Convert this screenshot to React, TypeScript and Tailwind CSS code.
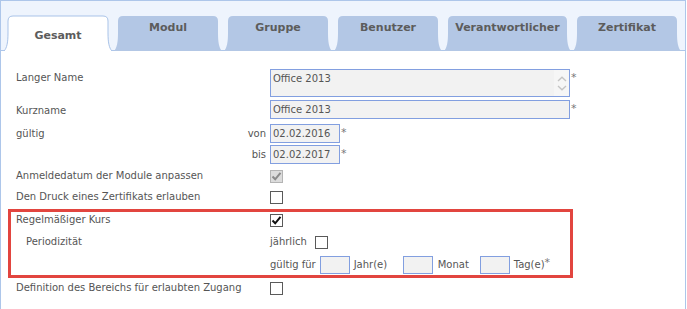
import React from "react";

const tabs = [
  { label: "Gesamt", w: 108, active: true },
  { label: "Modul", w: 108 },
  { label: "Gruppe", w: 108 },
  { label: "Benutzer", w: 108 },
  { label: "Verantwortlicher", w: 127 },
  { label: "Zertifikat", w: 108 },
];

function TabShape({ w, active }: { w: number; active?: boolean }) {
  const h = 36;
  const d = `M0,${h} C3,${h - 3} 4,${h - 9} 4,18 L4,6 Q4,1 9,1 L${w - 9},1 Q${w - 4},1 ${w - 4},6 L${w - 4},18 C${w - 4},${h - 9} ${w - 3},${h - 3} ${w},${h}`;
  return (
    <svg className="absolute inset-0" width={w} height={h} viewBox={`0 0 ${w} ${h}`}>
      <path d={d + " Z"} fill={active ? "#ffffff" : "#b3c7e5"} />
      {active && <path d={d} fill="none" stroke="#a9c3e8" strokeWidth="1" />}
    </svg>
  );
}

function Tab({ label, w, active }: { label: string; w: number; active?: boolean }) {
  return (
    <div className="relative -mb-px h-[36px] shrink-0" style={{ width: w }}>
      <TabShape w={w} active={active} />
      <div
        className={`relative text-center text-[11px] font-bold leading-[12px] text-[#5c5c5c] ${
          active ? "pt-[15px]" : "pt-[7px]"
        }`}
      >
        {label}
      </div>
    </div>
  );
}

function Checkbox({ checked, disabled }: { checked?: boolean; disabled?: boolean }) {
  return (
    <div
      className={`flex h-[13px] w-[13px] items-center justify-center border ${
        disabled ? "border-[#b4b4b4] bg-[#dcdcdc]" : "border-[#5a5a5a] bg-white"
      }`}
    >
      {checked && (
        <svg width="11" height="11" viewBox="0 0 11 11">
          <path
            d="M1.5,5.5 L4.2,8.3 L9.5,1.8"
            fill="none"
            stroke={disabled ? "#8a8a8a" : "#111111"}
            strokeWidth="2"
          />
        </svg>
      )}
    </div>
  );
}

function Star({ className = "" }: { className?: string }) {
  return <span className={`ml-[1px] text-[11px] leading-[13px] text-[#777] ${className}`}>*</span>;
}

function TextBox({ value, className }: { value?: string; className: string }) {
  return (
    <div
      className={`flex items-center border border-[#829fe0] bg-[#f2f2f2] pl-[2px] text-[10px] leading-[12px] text-[#555] ${className}`}
    >
      {value}
    </div>
  );
}

function Label({ children, className = "" }: { children?: React.ReactNode; className?: string }) {
  return <div className={`w-[254px] shrink-0 leading-[12px] ${className}`}>{children}</div>;
}

export default function App() {
  return (
    <div className="h-[309px] w-[687px] overflow-hidden bg-white font-['DejaVu_Sans',sans-serif] text-[10px] text-[#555]">
      <div className="h-full w-[686px] border-x border-t border-[#adc6ea]">
        <div className="flex h-[50px] items-end gap-[2px] border-b border-[#adc6ea] bg-[#eef4fd] pl-[3px]">
          {tabs.map((t) => (
            <Tab key={t.label} label={t.label} w={t.w} active={t.active} />
          ))}
        </div>

        <div className="pl-[15px] pt-[18px]">
          <div className="flex h-[28px] items-start">
            <Label className="pt-[3px]">Langer Name</Label>
            <div className="relative flex h-[28px] w-[300px] border border-[#829fe0] bg-[#f2f2f2]">
              <div className="flex-1 pl-[2px] pt-[3px] leading-[12px]">Office 2013</div>
              <div className="flex w-[15px] flex-col items-center justify-center gap-[3px] bg-[#f6f6f6]">
                <svg width="10" height="6" viewBox="0 0 10 6">
                  <path d="M1,5 L5,1.3 L9,5" fill="none" stroke="#c4c4c4" strokeWidth="1.4" />
                </svg>
                <svg width="10" height="6" viewBox="0 0 10 6">
                  <path d="M1,1 L5,4.7 L9,1" fill="none" stroke="#c4c4c4" strokeWidth="1.4" />
                </svg>
              </div>
            </div>
            <Star className="mt-[2px]" />
          </div>

          <div className="mt-[3px] flex h-[19px] items-center">
            <Label className="pt-[3px]">Kurzname</Label>
            <TextBox value="Office 2013" className="h-[19px] w-[300px]" />
            <Star className="-mt-[3px]" />
          </div>

          <div className="mt-[5px] flex h-[19px] items-center">
            <Label className="flex justify-between pr-[4px]">
              <span>gültig</span>
              <span>von</span>
            </Label>
            <TextBox value="02.02.2016" className="h-[19px] w-[70px]" />
            <Star className="-mt-[3px]" />
          </div>

          <div className="mt-[2px] flex h-[19px] items-center">
            <Label className="pr-[4px] text-right">bis</Label>
            <TextBox value="02.02.2017" className="h-[19px] w-[70px]" />
            <Star className="-mt-[3px]" />
          </div>

          <div className="mt-[4px] flex h-[16px] items-center">
            <Label>Anmeldedatum der Module anpassen</Label>
            <Checkbox checked disabled />
          </div>

          <div className="mt-[5px] flex h-[16px] items-center">
            <Label>Den Druck eines Zertifikats erlauben</Label>
            <Checkbox />
          </div>
        </div>

        <div className="ml-[7px] mt-[4px] w-[565px] border-[3px] border-[#e2453f] pb-[1px] pl-[5px]">
          <div className="flex h-[16px] items-center">
            <Label>Regelmäßiger Kurs</Label>
            <Checkbox checked />
          </div>
          <div className="mt-[6px] flex h-[16px] items-center">
            <Label className="pl-[10px]">Periodizität</Label>
            <span className="mr-[8px] leading-[12px]">jährlich</span>
            <Checkbox />
          </div>
          <div className="mt-[6px] flex h-[18px] items-center">
            <Label />
            <span className="mr-[4px] leading-[12px]">gültig für</span>
            <TextBox className="h-[18px] w-[30px]" />
            <span className="ml-[4px] w-[49px] leading-[12px]">Jahr(e)</span>
            <TextBox className="h-[18px] w-[30px]" />
            <span className="ml-[5px] w-[42px] leading-[12px]">Monat</span>
            <TextBox className="h-[18px] w-[30px]" />
            <span className="ml-[4px] leading-[12px]">
              Tag(e)<span className="relative -top-[2px] text-[11px] text-[#777]">*</span>
            </span>
          </div>
        </div>

        <div className="mt-[2px] flex h-[16px] items-center pl-[15px]">
          <Label>Definition des Bereichs für erlaubten Zugang</Label>
          <Checkbox />
        </div>
      </div>
    </div>
  );
}
